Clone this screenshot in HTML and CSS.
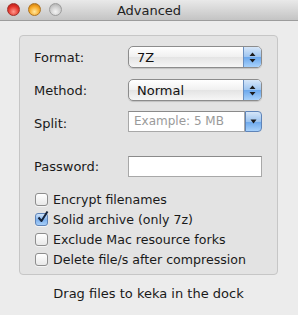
FILE: index.html
```html
<!DOCTYPE html>
<html lang="en">
<head>
    <meta charset="UTF-8">
    <title>Advanced</title>
    <link rel="stylesheet" href="styles.css">
</head>
<body>
    <div class="window">
        <!-- title bar -->
        <div class="titlebar">
            <div class="lights">
                <span class="light red"></span>
                <span class="light orange"></span>
                <span class="light gray"></span>
            </div>
            <div class="title">Advanced</div>
        </div>

        <div class="content">
            <div class="group">
                <div class="row">
                    <label class="label">Format:</label>
                    <div class="popup">
                        <span class="popup-text">7Z</span>
                        <span class="popup-arrows">
                            <svg width="7" height="11" viewBox="0 0 7 11"><path d="M3.5 0.5 L6.5 4 L0.5 4 Z M3.5 10.5 L6.5 7 L0.5 7 Z" fill="#1c1c1c"/></svg>
                        </span>
                    </div>
                </div>
                <div class="row">
                    <label class="label">Method:</label>
                    <div class="popup">
                        <span class="popup-text">Normal</span>
                        <span class="popup-arrows">
                            <svg width="7" height="11" viewBox="0 0 7 11"><path d="M3.5 0.5 L6.5 4 L0.5 4 Z M3.5 10.5 L6.5 7 L0.5 7 Z" fill="#1c1c1c"/></svg>
                        </span>
                    </div>
                </div>
                <div class="row">
                    <label class="label">Split:</label>
                    <div class="combo">
                        <span class="combo-text">Example: 5 MB</span>
                        <span class="combo-button">
                            <svg width="7" height="5" viewBox="0 0 7 5"><path d="M0.5 0.5 L6.5 0.5 L3.5 4.5 Z" fill="#1c1c1c"/></svg>
                        </span>
                    </div>
                </div>
                <div class="row row-password">
                    <label class="label">Password:</label>
                    <div class="textfield"></div>
                </div>

                <div class="checks">
                    <div class="check"><span class="box"></span>Encrypt filenames</div>
                    <div class="check"><span class="box checked">
                        <svg width="13" height="13" viewBox="0 0 13 13"><path d="M2.5 6.5 L5.5 10 L11.5 0.5" stroke="#15233a" stroke-width="2" fill="none" stroke-linejoin="round"/></svg>
                    </span>Solid archive (only 7z)</div>
                    <div class="check"><span class="box"></span>Exclude Mac resource forks</div>
                    <div class="check"><span class="box"></span>Delete file/s after compression</div>
                </div>
            </div>

            <p class="hint">Drag files to keka in the dock</p>
        </div>
    </div>
</body>
</html>
```

FILE: styles.css
```css
body {
    margin: 0;
    font-family: 'DejaVu Sans', 'Liberation Sans', sans-serif;
    font-size: 12px;
    color: #1a1a1a;
    background: #ececec;
}
.window {
    width: 298px;
    height: 315px;
    background: #ececec;
    overflow: hidden;
}
.titlebar {
    height: 20px;
    background: linear-gradient(#e9e9e9, #c4c4c4);
    border-bottom: 1px solid #9c9c9c;
    position: relative;
    display: flex;
    align-items: center;
    justify-content: center;
}
.lights {
    position: absolute;
    left: 7px;
    top: 3px;
    display: flex;
    gap: 8px;
}
.light {
    width: 13px;
    height: 13px;
    border-radius: 50%;
    box-sizing: border-box;
}
.red {
    background: radial-gradient(circle at 50% 70%, #ff9a8e 0%, #e3342b 55%, #a7120e 100%);
    border: 1px solid #a0302a;
}
.orange {
    background: radial-gradient(circle at 50% 70%, #ffe8a0 0%, #f6a724 55%, #b86b07 100%);
    border: 1px solid #ad7320;
}
.gray {
    background: radial-gradient(circle at 50% 70%, #f4f4f4 0%, #cdcdcd 55%, #a5a5a5 100%);
    border: 1px solid #9c9c9c;
}
.title {
    font-size: 13px;
    color: #222;
    padding-top: 1px;
}
.content {
    padding: 14px 20px 0 19px;
}
.group {
    background: #e3e3e3;
    border: 1px solid #c6c6c6;
    border-radius: 4px;
    height: 240px;
    box-sizing: border-box;
    padding: 10px 15px 0 14px;
}
.row {
    display: flex;
    align-items: center;
    height: 22px;
    margin-bottom: 11px;
}
.row-password {
    margin-top: 21px;
    margin-bottom: 12px;
}
.label {
    width: 94px;
    font-size: 13px;
}
.popup {
    width: 134px;
    height: 22px;
    box-sizing: border-box;
    border: 1px solid #8c8c8c;
    border-radius: 5px;
    background: linear-gradient(#ffffff, #f0f0f0 50%, #e4e4e4 51%, #f6f6f6);
    display: flex;
    align-items: center;
    overflow: hidden;
    box-shadow: 0 1px 1px rgba(0, 0, 0, 0.15);
}
.popup-text {
    flex: 1;
    padding-left: 8px;
    font-size: 13px;
    color: #111;
}
.popup-arrows {
    width: 17px;
    height: 100%;
    background: linear-gradient(#d6e6f8, #9cc4f0 50%, #6aa7ec 51%, #a7d1fb);
    border-left: 1px solid #6a8fbf;
    display: flex;
    align-items: center;
    justify-content: center;
}
.combo {
    width: 134px;
    height: 21px;
    display: flex;
    position: relative;
    top: -2px;
}
.combo-text {
    flex: 1;
    background: #fff;
    border: 1px solid #a8a8a8;
    border-top-color: #8a8a8a;
    color: #9a9a9a;
    font-size: 12px;
    padding-left: 5px;
    line-height: 19px;
}
.combo-button {
    width: 17px;
    background: linear-gradient(#d6e6f8, #9cc4f0 50%, #6aa7ec 51%, #a7d1fb);
    border: 1px solid #5f84b8;
    border-radius: 0 4px 4px 0;
    display: flex;
    align-items: center;
    justify-content: center;
    box-sizing: border-box;
}
.textfield {
    width: 134px;
    height: 21px;
    box-sizing: border-box;
    background: #fff;
    border: 1px solid #a8a8a8;
    border-top-color: #8a8a8a;
}
.checks {
    display: flex;
    flex-direction: column;
}
.check {
    display: flex;
    align-items: center;
    height: 20px;
    font-size: 12.6px;
}
.box {
    width: 13px;
    height: 13px;
    box-sizing: border-box;
    border: 1px solid #8e8e8e;
    border-radius: 3px;
    background: linear-gradient(#ffffff, #e8e8e8);
    margin: 0 5px 0 1px;
    position: relative;
    box-shadow: 0 1px 0 rgba(255, 255, 255, 0.6);
}
.box.checked {
    background: linear-gradient(#cfe3f9, #7fb2ee 55%, #a9cff8);
    border-color: #5f84b8;
}
.box svg {
    position: absolute;
    left: 0;
    top: -3px;
}
.hint {
    margin: 11px 0 0;
    text-align: center;
    font-size: 13px;
    color: #1a1a1a;
}
```
